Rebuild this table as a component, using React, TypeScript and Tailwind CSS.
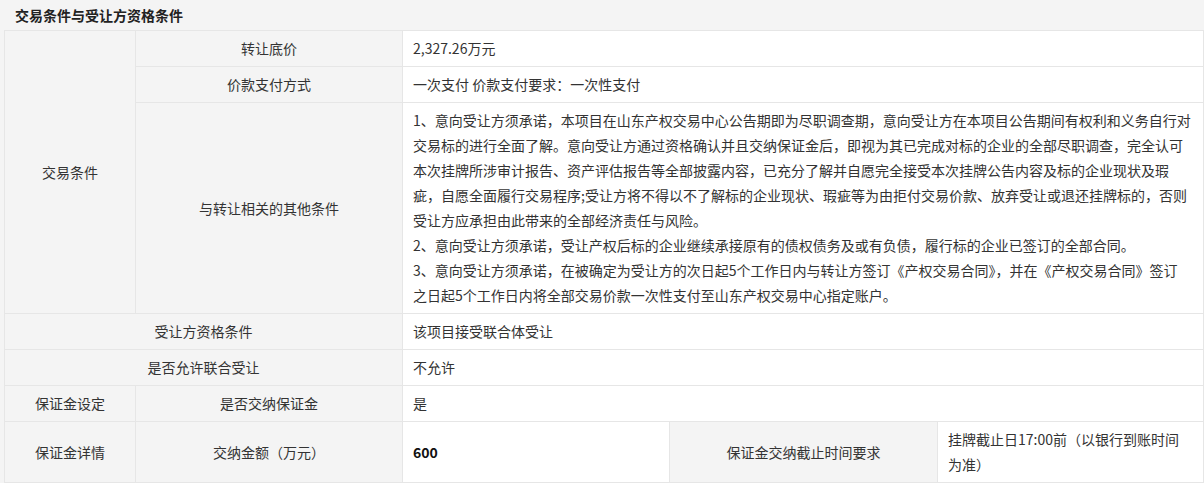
const otherTerms = [
  "1、意向受让方须承诺，本项目在山东产权交易中心公告期即为尽职调查期，意向受让方在本项目公告期间有权利和义务自行对",
  "交易标的进行全面了解。意向受让方通过资格确认并且交纳保证金后，即视为其已完成对标的企业的全部尽职调查，完全认可",
  "本次挂牌所涉审计报告、资产评估报告等全部披露内容，已充分了解并自愿完全接受本次挂牌公告内容及标的企业现状及瑕",
  "疵，自愿全面履行交易程序;受让方将不得以不了解标的企业现状、瑕疵等为由拒付交易价款、放弃受让或退还挂牌标的，否则",
  "受让方应承担由此带来的全部经济责任与风险。",
  "2、意向受让方须承诺，受让产权后标的企业继续承接原有的债权债务及或有负债，履行标的企业已签订的全部合同。",
  "3、意向受让方须承诺，在被确定为受让方的次日起5个工作日内与转让方签订《产权交易合同》，并在《产权交易合同》签订",
  "之日起5个工作日内将全部交易价款一次性支付至山东产权交易中心指定账户。",
];

const label = "border border-[#e6e6e6] bg-[#f4f4f4] text-center align-middle py-[5px] px-[10px]";
const value = "border border-[#e6e6e6] bg-white text-left align-middle py-[5px] px-[10px]";

export default function App() {
  return (
    <div className="w-[1204px] h-[483px] bg-[#f4f4f4] font-['Noto_Sans_CJK_SC','Microsoft_YaHei',sans-serif] text-[14px] leading-[25px] text-[#333] overflow-hidden">
      <div className="h-[30px] pl-[15px] flex items-center font-bold text-[14px] text-[#222]">
        交易条件与受让方资格条件
      </div>
      <div className="pl-[4px]">
        <table className="w-[1199px] table-fixed border-collapse">
          <colgroup>
            <col className="w-[131px]" />
            <col className="w-[267px]" />
            <col className="w-[267px]" />
            <col className="w-[268px]" />
            <col className="w-[266px]" />
          </colgroup>
          <tbody>
            <tr>
              <td rowSpan={3} className={label}>交易条件</td>
              <td className={label}>转让底价</td>
              <td colSpan={3} className={value}>2,327.26万元</td>
            </tr>
            <tr>
              <td className={label}>价款支付方式</td>
              <td colSpan={3} className={value}>一次支付 价款支付要求：一次性支付</td>
            </tr>
            <tr>
              <td className={label}>与转让相关的其他条件</td>
              <td colSpan={3} className={value}>
                {otherTerms.map((line) => (
                  <div key={line} className="whitespace-nowrap">{line}</div>
                ))}
              </td>
            </tr>
            <tr>
              <td colSpan={2} className={label}>受让方资格条件</td>
              <td colSpan={3} className={value}>该项目接受联合体受让</td>
            </tr>
            <tr>
              <td colSpan={2} className={label}>是否允许联合受让</td>
              <td colSpan={3} className={value}>不允许</td>
            </tr>
            <tr>
              <td className={label}>保证金设定</td>
              <td className={label}>是否交纳保证金</td>
              <td colSpan={3} className={value}>是</td>
            </tr>
            <tr>
              <td className={label}>保证金详情</td>
              <td className={label}>交纳金额（万元）</td>
              <td className={`${value} font-bold text-[#111]`}>600</td>
              <td className={label}>保证金交纳截止时间要求</td>
              <td className={value}>
                <div className="whitespace-nowrap">挂牌截止日17:00前（以银行到账时间</div>
                <div>为准）</div>
              </td>
            </tr>
          </tbody>
        </table>
      </div>
    </div>
  );
}
